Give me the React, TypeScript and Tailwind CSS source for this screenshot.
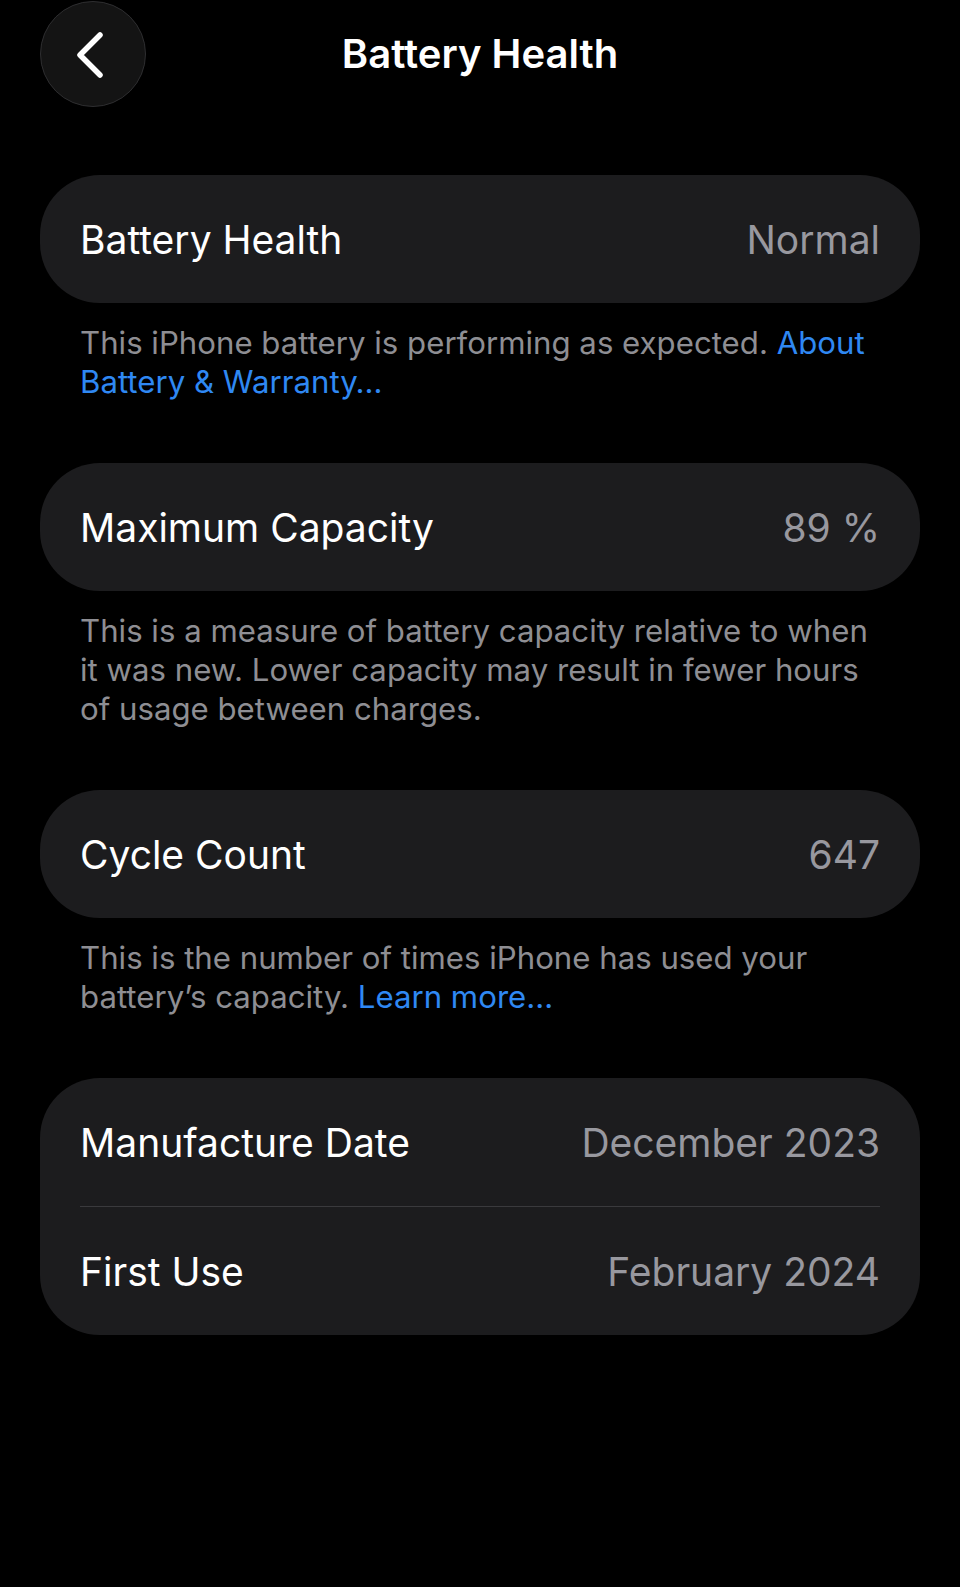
type Row = { label: string; value: string };

function Card({ rows }: { rows: Row[] }) {
  return (
    <div className="rounded-[60px] bg-[#1c1c1e]">
      {rows.map((row, i) => (
        <div key={row.label}>
          {i > 0 && <div className="mx-10 h-px bg-[#3a3a3d]" />}
          <div className="flex h-32 items-center justify-between px-10 text-[39px] leading-none">
            <span className="text-white">{row.label}</span>
            <span className="text-[#98989f]">{row.value}</span>
          </div>
        </div>
      ))}
    </div>
  );
}

function Footer({ children }: { children: React.ReactNode }) {
  return (
    <p className="mt-[21px] px-10 text-[31.2px] leading-[39px] text-[#8e8e93]">
      {children}
    </p>
  );
}

function Link({ children }: { children: React.ReactNode }) {
  return <span className="text-[#2f88f3]">{children}</span>;
}

export default function App() {
  return (
    <div className="min-h-[1587px] w-full bg-black font-['Inter','Noto_Sans',sans-serif] text-white antialiased">
      <header className="grid grid-cols-[106px_1fr_106px] items-center px-10 pt-px">
        <button className="flex size-[106px] items-center justify-center rounded-full border border-[#2e2e30] bg-[#141414]">
          <svg width="104" height="104" viewBox="0 0 104 104" fill="none">
            <polyline
              points="59,33 39,53 59,73"
              stroke="white"
              strokeWidth="5.5"
              strokeLinecap="round"
              strokeLinejoin="round"
            />
          </svg>
        </button>
        <h1 className="text-center text-[40px] font-semibold leading-none">
          Battery Health
        </h1>
        <div />
      </header>

      <main className="mt-[68px] flex flex-col gap-[61px] px-10">
        <section>
          <Card rows={[{ label: "Battery Health", value: "Normal" }]} />
          <Footer>
            This iPhone battery is performing as expected. <Link>About</Link>
            <br />
            <Link>Battery &amp; Warranty…</Link>
          </Footer>
        </section>

        <section>
          <Card rows={[{ label: "Maximum Capacity", value: "89 %" }]} />
          <Footer>
            This is a measure of battery capacity relative to when
            <br />
            it was new. Lower capacity may result in fewer hours
            <br />
            of usage between charges.
          </Footer>
        </section>

        <section>
          <Card rows={[{ label: "Cycle Count", value: "647" }]} />
          <Footer>
            This is the number of times iPhone has used your
            <br />
            battery’s capacity. <Link>Learn more…</Link>
          </Footer>
        </section>

        <section>
          <Card
            rows={[
              { label: "Manufacture Date", value: "December 2023" },
              { label: "First Use", value: "February 2024" },
            ]}
          />
        </section>
      </main>
    </div>
  );
}
